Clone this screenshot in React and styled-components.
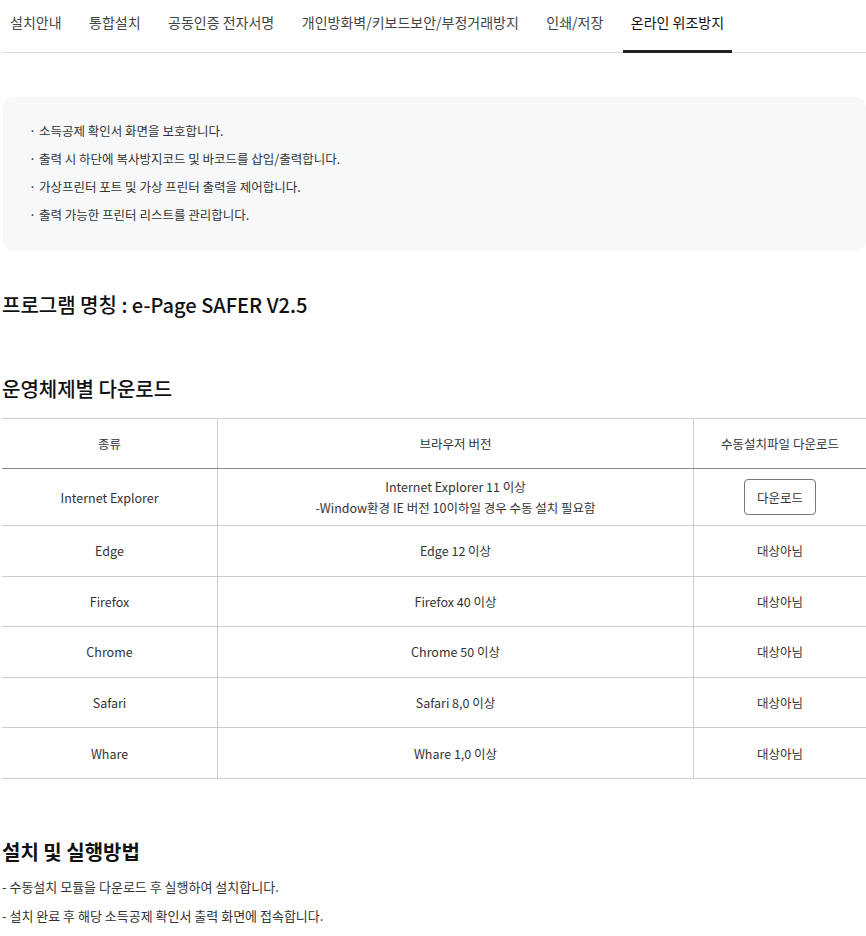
import React from 'react';
import styled, {createGlobalStyle} from 'styled-components';

const GlobalStyle = createGlobalStyle`
  html, body {
    margin: 0;
    padding: 0;
    background: #fff;
  }

  body {
    font-family: "Noto Sans CJK KR", "Noto Sans", sans-serif;
    color: #222;
  }
`;

const Page = styled.div`
  width: 866px;
  padding: 0 0 20px 2px;
  box-sizing: border-box;
`;

const TabBar = styled.nav`
  display: flex;
  gap: 11.5px;
  height: 52px;
  border-bottom: 1px solid #ddd;
`;

const Tab = styled.a`
  display: flex;
  align-items: flex-start;
  padding: 12px 8px 0;
  font-size: 14px;
  color: ${props => (props.active ? '#111' : '#444')};
  border-bottom: 3px solid ${props => (props.active ? '#222' : 'transparent')};
  margin-bottom: -1px;
  white-space: nowrap;
  cursor: pointer;
`;

const InfoBox = styled.ul`
  list-style: none;
  margin: 44px 0 0 1px;
  padding: 20px 26px 22px;
  background: #f7f8fa;
  border-radius: 10px;
`;

const InfoItem = styled.li`
  font-size: 12.5px;
  line-height: 28px;
  color: #333;

  &::before {
    content: '·';
    margin-right: 3px;
  }
`;

const Title = styled.h2`
  margin: ${props => props.top}px 0 0;
  font-size: 20px;
  font-weight: ${props => (props.bold ? 700 : 500)};
  line-height: 28px;
  color: #111;
`;

const Table = styled.table`
  width: 100%;
  margin-top: 15px;
  border-collapse: collapse;
  border-top: 1px solid #ccc;
  font-size: 12.5px;
  color: #333;
`;

const Th = styled.th`
  height: 49px;
  padding: 0;
  font-weight: 400;
  border-bottom: 1px solid #888;
  border-left: 1px solid #ccc;
  width: ${props => props.w || 'auto'};

  &:first-child {
    border-left: none;
  }
`;

const Td = styled.td`
  height: ${props => (props.tall ? 56 : 49.6)}px;
  padding: 0;
  text-align: center;
  line-height: 21px;
  border-bottom: 1px solid #ccc;
  border-left: 1px solid #ccc;

  &:first-child {
    border-left: none;
  }
`;

const DownloadButton = styled.button`
  width: 72px;
  height: 36px;
  border: 1px solid #777;
  border-radius: 4px;
  background: #fff;
  font-family: inherit;
  font-size: 12.5px;
  color: #333;
  cursor: pointer;
`;

const Steps = styled.div`
  margin-top: 6px;
`;

const Step = styled.p`
  margin: 0;
  font-size: 13px;
  line-height: 29px;
  color: #333;
`;

const tabs = ['설치안내', '통합설치', '공동인증 전자서명', '개인방화벽/키보드보안/부정거래방지', '인쇄/저장', '온라인 위조방지'];

const infos = [
  '소득공제 확인서 화면을 보호합니다.',
  '출력 시 하단에 복사방지코드 및 바코드를 삽입/출력합니다.',
  '가상프린터 포트 및 가상 프린터 출력을 제어합니다.',
  '출력 가능한 프린터 리스트를 관리합니다.',
];

const browsers = [
  {name: 'Edge', version: 'Edge 12 이상'},
  {name: 'Firefox', version: 'Firefox 40 이상'},
  {name: 'Chrome', version: 'Chrome 50 이상'},
  {name: 'Safari', version: 'Safari 8,0 이상'},
  {name: 'Whare', version: 'Whare 1,0 이상'},
];

export default function App() {
  return (
    <Page>
      <GlobalStyle />
      <TabBar>
        {tabs.map((t, i) => (
          <Tab key={t} active={i === tabs.length - 1}>{t}</Tab>
        ))}
      </TabBar>

      <InfoBox>
        {infos.map(text => <InfoItem key={text}>{text}</InfoItem>)}
      </InfoBox>

      <Title top={40}>프로그램 명칭 : e-Page SAFER V2.5</Title>
      <Title top={56}>운영체제별 다운로드</Title>

      <Table>
        <thead>
          <tr>
            <Th w="215px">종류</Th>
            <Th>브라우저 버전</Th>
            <Th w="172px">수동설치파일 다운로드</Th>
          </tr>
        </thead>
        <tbody>
          <tr>
            <Td tall>Internet Explorer</Td>
            <Td tall>
              Internet Explorer 11 이상<br />
              -Window환경 IE 버전 10이하일 경우 수동 설치 필요함
            </Td>
            <Td tall><DownloadButton>다운로드</DownloadButton></Td>
          </tr>
          {browsers.map(b => (
            <tr key={b.name}>
              <Td>{b.name}</Td>
              <Td>{b.version}</Td>
              <Td>대상아님</Td>
            </tr>
          ))}
        </tbody>
      </Table>

      <Title top={59} bold>설치 및 실행방법</Title>
      <Steps>
        <Step>- 수동설치 모듈을 다운로드 후 실행하여 설치합니다.</Step>
        <Step>- 설치 완료 후 해당 소득공제 확인서 출력 화면에 접속합니다.</Step>
      </Steps>
    </Page>
  );
}
